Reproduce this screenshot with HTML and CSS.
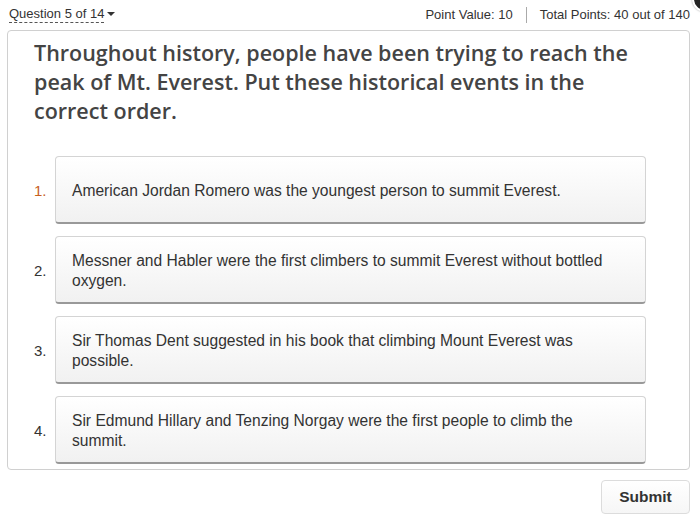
FILE: index.html
```html
<!DOCTYPE html>
<html>
<head>
<meta charset="utf-8">
<link rel="stylesheet" href="styles.css">
</head>
<body>
<div class="page">
  <div class="topbar">
    <div class="qnav"><span class="qlabel">Question 5 of 14</span><span class="caret"></span></div>
    <div class="points">
      <span>Point Value: 10</span>
      <span class="sep"></span>
      <span>Total Points: 40 out of 140</span>
    </div>
  </div>
  <div class="panel">
    <h1 class="question">Throughout history, people have been trying to reach the peak of Mt. Everest. Put these historical events in the correct order.</h1>
    <ol class="items">
      <li class="item"><span class="num num-active">1.</span><div class="card">American Jordan Romero was the youngest person to summit Everest.</div></li>
      <li class="item"><span class="num">2.</span><div class="card">Messner and Habler were the first climbers to summit Everest without bottled oxygen.</div></li>
      <li class="item"><span class="num">3.</span><div class="card">Sir Thomas Dent suggested in his book that climbing Mount Everest was possible.</div></li>
      <li class="item"><span class="num">4.</span><div class="card">Sir Edmund Hillary and Tenzing Norgay were the first people to climb the summit.</div></li>
    </ol>
  </div>
  <div class="actions">
    <button class="submit">Submit</button>
  </div>
  <span class="close-dot"></span>
</div>
</body>
</html>
```
FILE: styles.css
```css
html, body {
  margin: 0;
  padding: 0;
  background: #fff;
}
.page {
  position: relative;
  width: 700px;
  height: 523px;
  overflow: hidden;
  font-family: "Liberation Sans", Arial, sans-serif;
  color: #333;
}
.topbar {
  display: flex;
  justify-content: space-between;
  align-items: center;
  height: 28px;
  padding: 1px 10px 0 9px;
  box-sizing: border-box;
  font-size: 13px;
  color: #333;
}
.qnav {
  display: flex;
  align-items: center;
  gap: 3px;
}
.qlabel {
  border-bottom: 1px dashed #555;
  line-height: 15px;
  padding-bottom: 1px;
}
.caret {
  width: 0;
  height: 0;
  border-left: 4px solid transparent;
  border-right: 4px solid transparent;
  border-top: 4px solid #333;
  margin-top: -2px;
}
.points {
  display: flex;
  align-items: center;
  gap: 13px;
}
.sep {
  width: 1px;
  height: 16px;
  background: #aaa;
}
.panel {
  margin: 2px 10px 0 7px;
  border: 1px solid #d0d0d0;
  border-radius: 4px;
  padding: 7px 43px 5px 26px;
}
.question {
  margin: 0;
  font-family: "Open Sans", sans-serif;
  font-weight: 600;
  font-size: 21.5px;
  line-height: 29px;
  color: #444;
}
.items {
  list-style: none;
  margin: 31px 0 0 0;
  padding: 0;
  display: flex;
  flex-direction: column;
  gap: 12px;
}
.item {
  display: flex;
  align-items: center;
}
.num {
  width: 21px;
  font-size: 15px;
  color: #333;
}
.num-active {
  color: #c8601e;
}
.card {
  flex: 1;
  box-sizing: border-box;
  min-height: 68px;
  display: flex;
  align-items: center;
  padding: 8px 16px 5px;
  font-size: 15.6px;
  line-height: 20px;
  color: #333;
  border: 1px solid #d4d4d4;
  border-bottom: 2px solid #999;
  border-radius: 4px;
  background: linear-gradient(#ffffff, #f1f1f1);
}
.actions {
  display: flex;
  justify-content: flex-end;
  padding: 10px 10px 0 0;
}
.submit {
  width: 89px;
  height: 34px;
  font-family: "Liberation Sans", Arial, sans-serif;
  font-weight: bold;
  font-size: 15.5px;
  color: #333;
  background: linear-gradient(#ffffff, #f6f6f6);
  border: 1px solid #dcdcdc;
  border-radius: 4px;
}
.close-dot {
  position: absolute;
  left: 692px;
  top: -14px;
  width: 22px;
  height: 22px;
  border-radius: 50%;
  background: #222;
  border: 2px solid #fff;
  box-shadow: 0 0 2px #999;
}
```
